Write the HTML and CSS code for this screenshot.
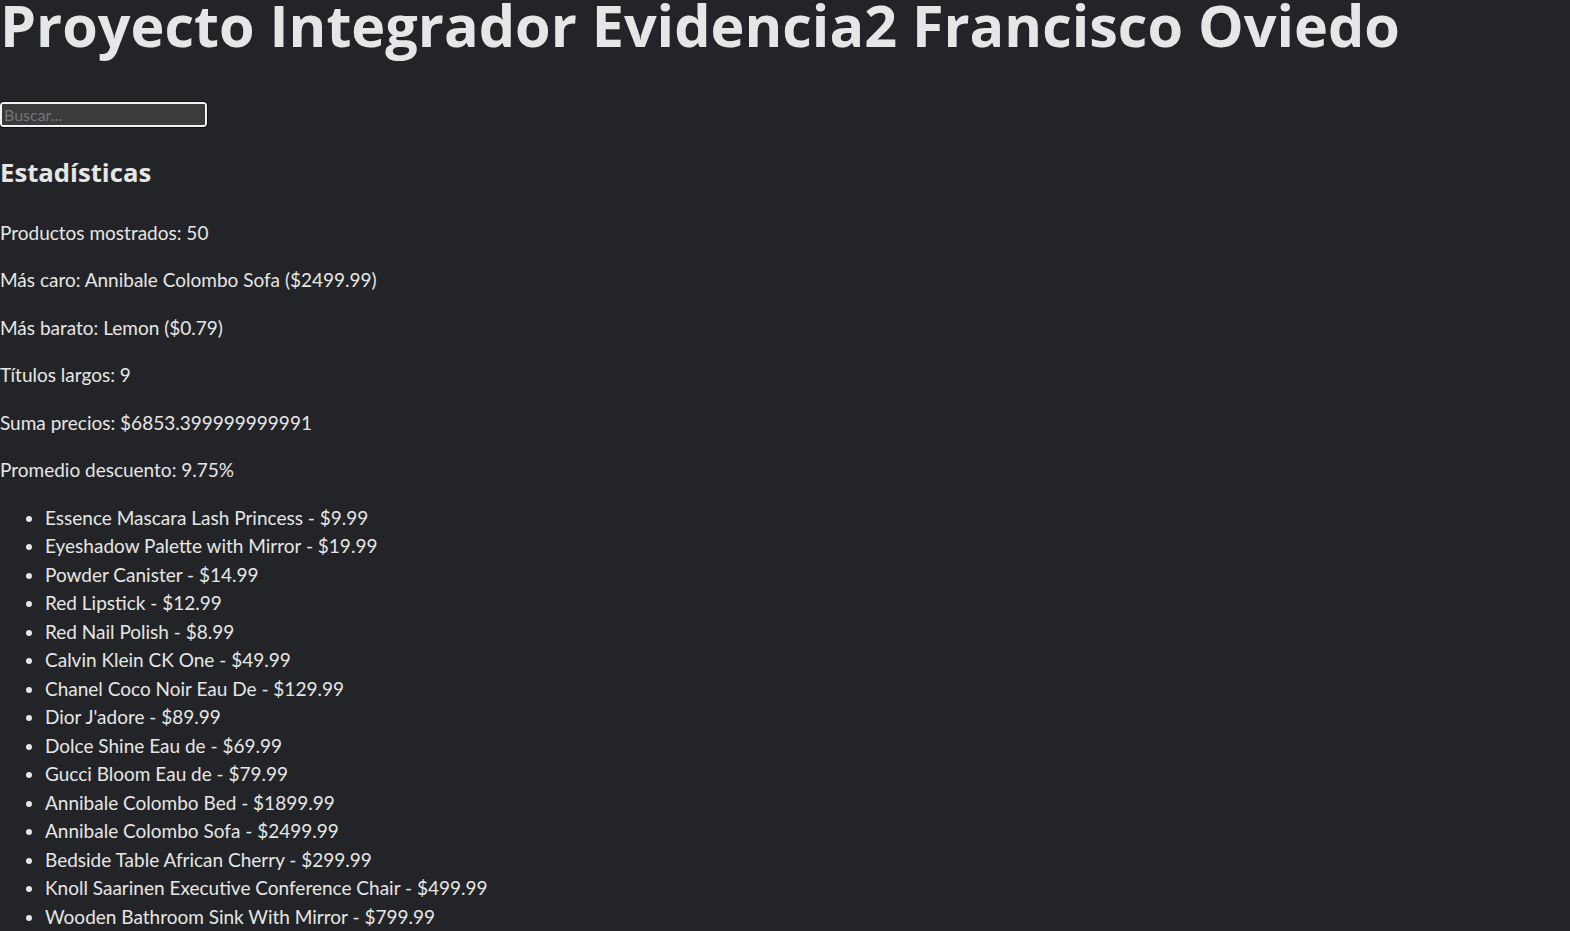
FILE: index.html
```html
<!DOCTYPE html>
<html lang="es">
<head>
<meta charset="utf-8">
<title>Proyecto Integrador Evidencia2 Francisco Oviedo</title>
<link rel="stylesheet" href="styles.css">
</head>
<body>
<h1 class="title">Proyecto Integrador Evidencia2 Francisco Oviedo</h1>
<div class="search-row"><input class="search" type="text" placeholder="Buscar..."></div>
<section class="stats">
  <h2 class="stats-title">Estadísticas</h2>
  <p class="stat">Productos mostrados: 50</p>
  <p class="stat">Más caro: Annibale Colombo Sofa ($2499.99)</p>
  <p class="stat">Más barato: Lemon ($0.79)</p>
  <p class="stat">Títulos largos: 9</p>
  <p class="stat">Suma precios: $6853.399999999991</p>
  <p class="stat">Promedio descuento: 9.75%</p>
</section>
<ul class="products">
  <li>Essence Mascara Lash Princess - $9.99</li>
  <li>Eyeshadow Palette with Mirror - $19.99</li>
  <li>Powder Canister - $14.99</li>
  <li>Red Lipstick - $12.99</li>
  <li>Red Nail Polish - $8.99</li>
  <li>Calvin Klein CK One - $49.99</li>
  <li>Chanel Coco Noir Eau De - $129.99</li>
  <li>Dior J'adore - $89.99</li>
  <li>Dolce Shine Eau de - $69.99</li>
  <li>Gucci Bloom Eau de - $79.99</li>
  <li>Annibale Colombo Bed - $1899.99</li>
  <li>Annibale Colombo Sofa - $2499.99</li>
  <li>Bedside Table African Cherry - $299.99</li>
  <li>Knoll Saarinen Executive Conference Chair - $499.99</li>
  <li>Wooden Bathroom Sink With Mirror - $799.99</li>
</ul>
</body>
</html>
```
FILE: styles.css
```css
html {
  background: #232427;
}
body {
  margin: 0;
  background: #232427;
  color: #e6e6e6;
  font-family: "Lato", "Open Sans", sans-serif;
  font-size: 19px;
  line-height: 1.5;
  overflow: hidden;
}
.title {
  font-family: "Open Sans", "Lato", sans-serif;
  font-size: 57.5px;
  font-weight: 700;
  line-height: 0.9;
  margin: 0 0 50px 0;
  white-space: nowrap;
}
.search-row {
  line-height: 0;
}
.search {
  box-sizing: border-box;
  width: 207px;
  height: 25px;
  margin: 0;
  padding: 0 2px;
  background: #3b3b3d;
  border: 2px solid #f2f2f2;
  border-radius: 3px;
  color: #e6e6e6;
  font-family: "Lato", sans-serif;
  font-size: 16px;
  outline: 1px solid #111;
}
.search::placeholder {
  color: #767676;
}
.stats-title {
  font-family: "Open Sans", "Lato", sans-serif;
  font-size: 25.7px;
  font-weight: 700;
  line-height: 1.5;
  margin: 27px 0 26.5px;
}
.stat {
  margin: 19px 0;
}
.products {
  margin: 19px 0;
  padding-left: 45px;
}
```
